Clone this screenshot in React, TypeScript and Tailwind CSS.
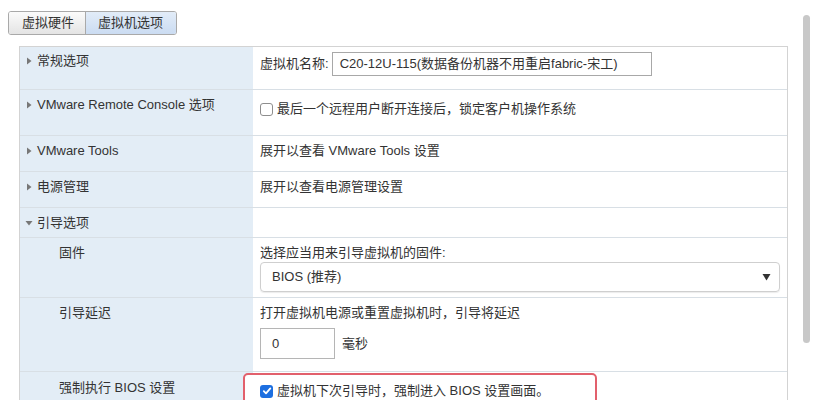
import React from "react";

const font = { fontFamily: '"Liberation Sans", "Noto Sans CJK SC", sans-serif' };

function Tri({ open = false }: { open?: boolean }) {
  return open ? (
    <svg width="8" height="8" viewBox="0 0 8 8" className="shrink-0">
      <path d="M0.5 2 L7.5 2 L4 6.5 Z" fill="#777" />
    </svg>
  ) : (
    <svg width="8" height="8" viewBox="0 0 8 8" className="shrink-0">
      <path d="M2 0.5 L6.5 4 L2 7.5 Z" fill="#777" />
    </svg>
  );
}

function Row({
  h,
  left,
  right,
  first = false,
}: {
  h: string;
  left: React.ReactNode;
  right: React.ReactNode;
  first?: boolean;
}) {
  return (
    <div className={`flex ${h} ${first ? "" : "border-t border-[#d8dfe5]"}`}>
      <div className="w-[233px] shrink-0 bg-[#e3edf6]">{left}</div>
      <div className="flex-1 bg-white relative">{right}</div>
    </div>
  );
}

export default function App() {
  return (
    <div className="w-[830px] h-[400px] bg-white relative overflow-hidden text-[13px] text-[#333]" style={font}>
      <div className="flex h-full">
        <div className="flex-1 flex flex-col">
          {/* tabs */}
          <div className="pt-[11px] pl-[8px]">
            <div className="inline-flex h-[24px] rounded-[3px] border border-[#a9a9a9] overflow-hidden">
              <div className="w-[77px] flex items-center pl-[13px] bg-gradient-to-b from-[#fbfbfb] to-[#e4e4e4] border-r border-[#a9a9a9]">
                虚拟硬件
              </div>
              <div className="w-[90px] flex items-center pl-[12px] bg-gradient-to-b from-[#e2ecf8] to-[#cbdcf2]">
                虚拟机选项
              </div>
            </div>
          </div>

          {/* table */}
          <div className="mt-[11px] ml-[19px] w-[769px] border border-[#d3d3d3] leading-[16px]">
            <Row
              first
              h="h-[42px]"
              left={
                <div className="flex items-center gap-[4px] pt-[6px] pl-[5px]">
                  <Tri />
                  <span>常规选项</span>
                </div>
              }
              right={
                <div className="flex items-center pt-[5px] pl-[7px]">
                  <span>虚拟机名称:</span>
                  <div className="ml-[3px] w-[320px] h-[24px] border border-[#a8a8a8] flex items-center pl-[7px] text-[13px]">
                    C20-12U-115(数据备份机器不用重启fabric-宋工)
                  </div>
                </div>
              }
            />
            <Row
              h="h-[46px]"
              left={
                <div className="flex items-center gap-[4px] pt-[7px] pl-[5px]">
                  <Tri />
                  <span>VMware Remote Console 选项</span>
                </div>
              }
              right={
                <div className="flex items-center pt-[11px] pl-[7px]">
                  <div className="w-[13px] h-[13px] border border-[#8e8e8e] rounded-[3px] bg-white mr-[4px]" />
                  <span>最后一个远程用户断开连接后，锁定客户机操作系统</span>
                </div>
              }
            />
            <Row
              h="h-[36px]"
              left={
                <div className="flex items-center gap-[4px] pt-[7px] pl-[5px]">
                  <Tri />
                  <span>VMware Tools</span>
                </div>
              }
              right={<div className="pt-[7px] pl-[7px]">展开以查看 VMware Tools 设置</div>}
            />
            <Row
              h="h-[36px]"
              left={
                <div className="flex items-center gap-[4px] pt-[7px] pl-[5px]">
                  <Tri />
                  <span>电源管理</span>
                </div>
              }
              right={<div className="pt-[7px] pl-[7px]">展开以查看电源管理设置</div>}
            />
            <Row
              h="h-[30px]"
              left={
                <div className="flex items-center gap-[4px] pt-[7px] pl-[5px]">
                  <Tri open />
                  <span>引导选项</span>
                </div>
              }
              right={<div />}
            />
            <Row
              h="h-[60px]"
              left={<div className="pt-[7px] pl-[39px]">固件</div>}
              right={
                <div className="pt-[7px] pl-[7px] pr-[7px]">
                  <div>选择应当用来引导虚拟机的固件:</div>
                  <div className="mt-[1px] w-[520px] h-[30px] border border-[#cfcfcf] rounded-[4px] shadow-[0_1px_1px_rgba(0,0,0,0.08)] flex items-center justify-between pl-[11px] pr-[8px]">
                    <span>BIOS (推荐)</span>
                    <svg width="9" height="8" viewBox="0 0 9 8">
                      <path d="M0.5 1 L8.5 1 L4.5 7.5 Z" fill="#333" />
                    </svg>
                  </div>
                </div>
              }
            />
            <Row
              h="h-[74px]"
              left={<div className="pt-[7px] pl-[39px]">引导延迟</div>}
              right={
                <div className="pt-[7px] pl-[7px]">
                  <div>打开虚拟机电源或重置虚拟机时，引导将延迟</div>
                  <div className="mt-[7px] flex items-center">
                    <div className="w-[75px] h-[31px] border border-[#b5b5b5] flex items-center pl-[11px]">0</div>
                    <span className="ml-[7px]">毫秒</span>
                  </div>
                </div>
              }
            />
            <Row
              h="h-[60px]"
              left={<div className="pt-[8px] pl-[39px]">强制执行 BIOS 设置</div>}
              right={
                <div className="absolute left-[-10px] top-[1px] w-[354px] h-[50px] border-2 border-[#e2606c] rounded-[5px] bg-white">
                  <div className="flex items-center pt-[8px] pl-[15px]">
                    <div className="w-[13px] h-[13px] rounded-[3px] bg-[#1d6fe0] flex items-center justify-center mr-[4px]">
                      <svg width="10" height="10" viewBox="0 0 10 10">
                        <path d="M1.8 5.2 L4 7.4 L8.3 2.4" stroke="white" strokeWidth="1.8" fill="none" strokeLinecap="round" strokeLinejoin="round" />
                      </svg>
                    </div>
                    <span>虚拟机下次引导时，强制进入 BIOS 设置画面。</span>
                  </div>
                </div>
              }
            />
          </div>
        </div>

        {/* scrollbar area */}
        <div className="w-[42px] shrink-0 relative">
          <div className="absolute left-[15px] top-[15px] w-[7px] h-[328px] rounded-full bg-[#c8c8c8]" />
        </div>
        <div className="w-[5px] shrink-0 bg-[#4d4d4d]" />
      </div>
    </div>
  );
}
